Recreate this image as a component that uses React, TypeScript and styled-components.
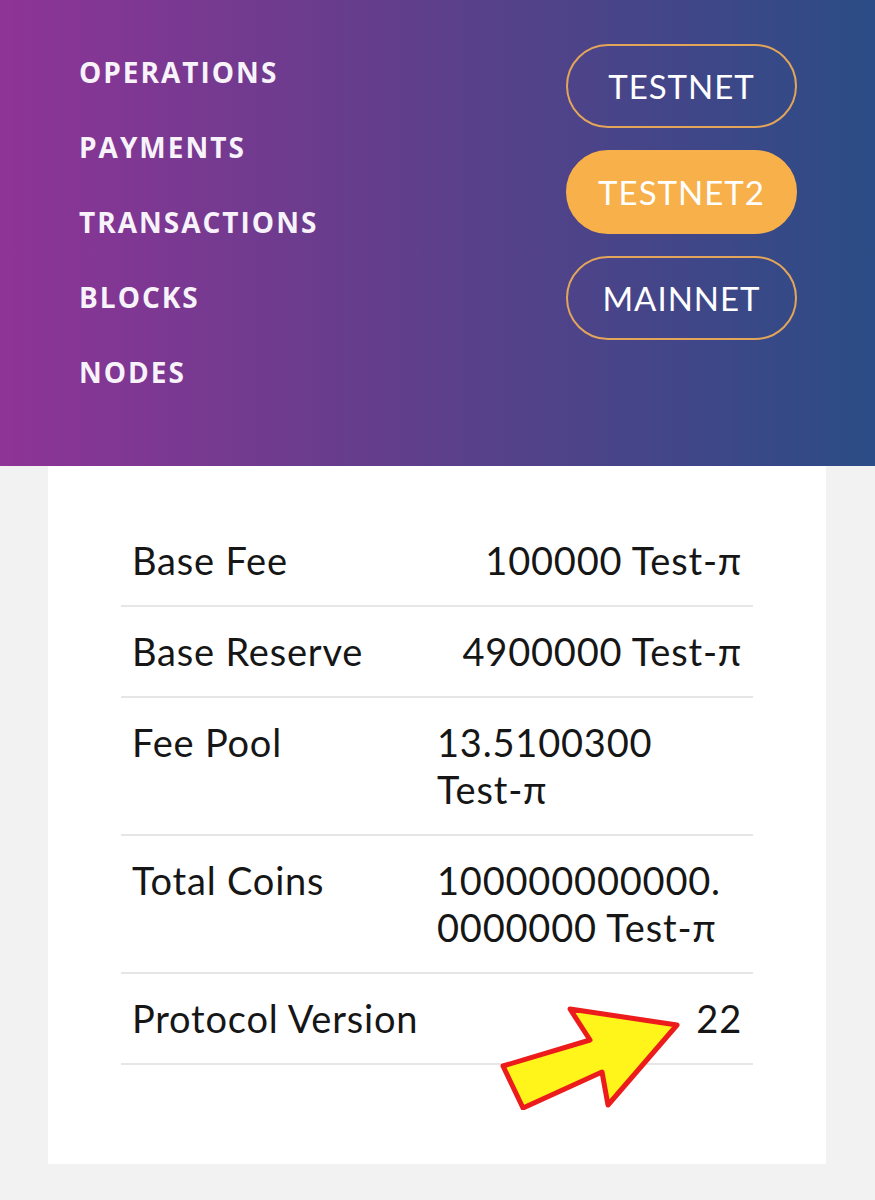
import styled, { createGlobalStyle } from "styled-components";

const GlobalStyle = createGlobalStyle`
  html, body {
    margin: 0;
    padding: 0;
    background: #f2f2f2;
  }
  * {
    box-sizing: border-box;
  }
`;

// header

const Header = styled.header`
  height: 466px;
  display: flex;
  justify-content: space-between;
  align-items: flex-start;
  padding: 44px 78px 0 79px;
  background: linear-gradient(90deg, #8e3496 0%, #5d3f8b 50%, #2b4c86 100%);
`;

const NavList = styled.ul`
  list-style: none;
  margin: 11px 0 0 0;
  padding: 0;
  display: flex;
  flex-direction: column;
  gap: 41px;
`;

const NavItem = styled.li`
  font-family: "Open Sans", sans-serif;
  font-weight: 700;
  font-size: 28px;
  line-height: 34px;
  letter-spacing: 2px;
  color: #f8f3fa;
`;

const NetList = styled.div`
  display: flex;
  flex-direction: column;
  gap: 22px;
`;

const NetButton = styled.button<{ $active?: boolean }>`
  width: 231px;
  height: 84px;
  border-radius: 42px;
  border: 2px solid ${(p) => (p.$active ? "#f8b04a" : "#e3a55a")};
  background: ${(p) => (p.$active ? "#f8b04a" : "transparent")};
  color: #ffffff;
  font-family: "Lato", sans-serif;
  font-size: 33px;
  font-weight: 400;
  letter-spacing: 1px;
  padding: 0;
  cursor: pointer;
`;

// stats card

const Main = styled.main`
  padding: 0 49px 38px 48px;
`;

const Card = styled.section`
  position: relative;
  background: #ffffff;
  padding: 50px 73px 99px;
`;

const Row = styled.div`
  display: flex;
  justify-content: space-between;
  align-items: flex-start;
  padding: 21px 11px;
  border-bottom: 2px solid #e6e6e6;
  font-family: "Lato", sans-serif;
  font-size: 38px;
  line-height: 47px;
  letter-spacing: 0.8px;
  color: #161616;
`;

const Label = styled.div`
  flex-shrink: 0;
`;

const Value = styled.div`
  max-width: 50%;
  overflow-wrap: anywhere;
`;

const Arrow = styled.svg`
  position: absolute;
  left: 447px;
  top: 534px;
  width: 190px;
  height: 110px;
`;

const stats = [
  { label: "Base Fee", value: "100000 Test-π" },
  { label: "Base Reserve", value: "4900000 Test-π" },
  { label: "Fee Pool", value: "13.5100300 Test-π" },
  { label: "Total Coins", value: "100000000000.0000000 Test-π" },
  { label: "Protocol Version", value: "22" },
];

const navItems = ["OPERATIONS", "PAYMENTS", "TRANSACTIONS", "BLOCKS", "NODES"];
const networks = ["TESTNET", "TESTNET2", "MAINNET"];

export default function App() {
  return (
    <>
      <GlobalStyle />
      <Header>
        <NavList>
          {navItems.map((item) => (
            <NavItem key={item}>{item}</NavItem>
          ))}
        </NavList>
        <NetList>
          {networks.map((n) => (
            <NetButton key={n} $active={n === "TESTNET2"}>
              {n}
            </NetButton>
          ))}
        </NetList>
      </Header>
      <Main>
        <Card>
          {stats.map((s) => (
            <Row key={s.label}>
              <Label>{s.label}</Label>
              <Value>{s.value}</Value>
            </Row>
          ))}
          <Arrow viewBox="495 1000 190 110">
            <polygon
              points="503,1066 523,1108 602,1072 608,1105 677,1025 570,1009 590,1040"
              fill="#fff51a"
              stroke="#ec1c1c"
              strokeWidth="5"
              strokeLinejoin="round"
            />
          </Arrow>
        </Card>
      </Main>
    </>
  );
}
